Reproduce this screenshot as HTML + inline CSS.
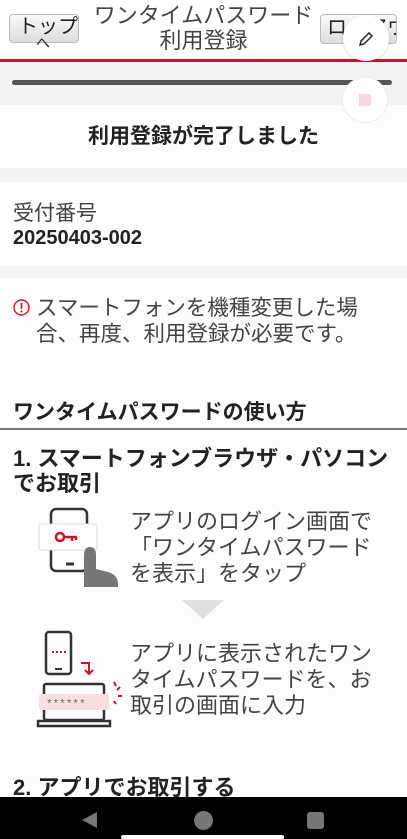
<!DOCTYPE html>
<html><head><meta charset="utf-8"><style>
*{margin:0;padding:0;box-sizing:border-box}
body{width:407px;height:839px;overflow:hidden;background:#fdfcfe;font-family:"Liberation Sans","Noto Sans CJK JP",sans-serif;color:#333;position:relative}
.abs{position:absolute;white-space:nowrap}
.gray{background:#f3f2f4}
</style></head><body>
<div class="abs" style="left:0;top:0;width:407px;height:60px;background:#fff"></div>
<div class="abs" style="left:9px;top:14px;width:70px;height:29px;border:1px solid #bbb;border-radius:4px;background:linear-gradient(#fafafa,#ddd);font-size:20px;line-height:20px;padding:2px 0 0 8px;color:#222;overflow:hidden">トップ</div>
<div class="abs" style="left:36px;top:36px;font-size:14px;line-height:14px;color:#222">へ</div>
<div class="abs" style="left:0;top:3px;width:407px;text-align:center;font-size:22px;line-height:25px;color:#444">ワンタイムパスワード<br>利用登録</div>
<div class="abs" style="left:320px;top:14px;width:77px;height:30px;border:1px solid #bbb;border-radius:4px;background:linear-gradient(#fafafa,#ddd);font-size:20px;line-height:20px;padding:3px 0 0 6px;color:#222;overflow:hidden">ログアウト</div>
<div class="abs" style="left:0;top:59px;width:407px;height:3px;background:#d8101e"></div>
<div class="abs gray" style="left:0;top:62px;width:407px;height:43px"></div>
<div class="abs" style="left:12px;top:80px;width:380px;height:5px;border-radius:3px;background:#555"></div>
<div class="abs" style="left:343px;top:15px;width:46px;height:46px;border-radius:50%;background:#fff;box-shadow:0 1px 3px rgba(0,0,0,.15)"></div>
<svg class="abs" style="left:357px;top:30px" width="18" height="18" viewBox="0 0 18 18"><path d="M3 15l1-4 8-8 3 3-8 8z" fill="none" stroke="#222" stroke-width="1.5"/></svg>
<div class="abs" style="left:342px;top:77px;width:46px;height:46px;border-radius:50%;background:#fff;border:1px solid #eee"></div>
<div class="abs" style="left:359px;top:94px;width:12px;height:12px;background:#f9d6dc"></div>
<div class="abs" style="left:0;top:120px;width:407px;text-align:center;font-size:21px;font-weight:bold;color:#222">利用登録が完了しました</div>
<div class="abs gray" style="left:0;top:168px;width:407px;height:14px"></div>
<div class="abs" style="left:13px;top:197px;font-size:21px;color:#444">受付番号</div>
<div class="abs" style="left:13px;top:227px;font-size:20px;font-weight:bold;color:#222">20250403-002</div>
<div class="abs gray" style="left:0;top:266px;width:407px;height:12px"></div>
<svg class="abs" style="left:13px;top:299px" width="17" height="17" viewBox="0 0 17 17"><circle cx="8.5" cy="8.5" r="7.5" fill="none" stroke="#d8101e" stroke-width="1.4"/><path d="M8.5 4v6" stroke="#d8101e" stroke-width="1.6"/><circle cx="8.5" cy="12.5" r="1" fill="#d8101e"/></svg>
<div class="abs" style="left:36px;top:295px;font-size:21.5px;line-height:26px;color:#444">スマートフォンを機種変更した場<br>合、再度、利用登録が必要です。</div>
<div class="abs" style="left:13px;top:396px;font-size:21px;font-weight:bold;color:#222">ワンタイムパスワードの使い方</div>
<div class="abs" style="left:0;top:428px;width:407px;height:2px;background:#777"></div>
<div class="abs" style="left:13px;top:446px;font-size:22px;line-height:25px;font-weight:bold;color:#222">1. スマートフォンブラウザ・パソコン<br>でお取引</div>
<svg class="abs" style="left:36px;top:505px" width="85" height="82" viewBox="0 0 85 82">
<rect x="15" y="4" width="36" height="62" rx="5" fill="none" stroke="#333" stroke-width="2.5"/>
<path d="M30 59h8" stroke="#333" stroke-width="3"/>
<rect x="3" y="19" width="58" height="26" rx="3" fill="#fff" stroke="#ddd"/>
<circle cx="24" cy="32" r="4" fill="none" stroke="#d8101e" stroke-width="2.5"/><path d="M28 32h13M36 32v4M40 32v3" stroke="#d8101e" stroke-width="2.5"/>
<path d="M48 85V50q0-8 6-8t6 8v14l12 3q10 3 10 12v6z" fill="#777"/>
</svg>
<div class="abs" style="left:130px;top:509px;font-size:22px;line-height:26px;color:#444">アプリのログイン画面で<br>「ワンタイムパスワード<br>を表示」をタップ</div>
<svg class="abs" style="left:182px;top:600px" width="42" height="20"><path d="M0 0h42L21 19z" fill="#e0e0e2"/></svg>
<svg class="abs" style="left:36px;top:630px" width="90" height="98" viewBox="0 0 90 98">
<rect x="10" y="2" width="25" height="42" rx="3" fill="none" stroke="#333" stroke-width="2.5"/>
<path d="M19 39h7" stroke="#333" stroke-width="2"/>
<path d="M16 22h14" stroke="#d8101e" stroke-width="2" stroke-dasharray="2 2"/>
<path d="M45 33h8v10M49 40l4 4 4-4" fill="none" stroke="#d8101e" stroke-width="2"/>
<rect x="8" y="54" width="60" height="36" rx="2" fill="none" stroke="#333" stroke-width="2.5"/>
<path d="M2 91h72v5H2z" fill="none" stroke="#333" stroke-width="2.5"/>
<rect x="3" y="64" width="70" height="16" rx="2" fill="#f8dde1"/>
<text x="10" y="77" font-size="11" fill="#666" font-family="Liberation Mono,monospace">******</text>
<path d="M78 52l2 4M84 57l-3 3M86 66h-4M80 74l-2-3" stroke="#d8101e" stroke-width="2"/>
</svg>
<div class="abs" style="left:130px;top:641px;font-size:22px;line-height:26px;color:#444">アプリに表示されたワン<br>タイムパスワードを、お<br>取引の画面に入力</div>
<div class="abs" style="left:13px;top:770px;font-size:22px;font-weight:bold;color:#222">2. アプリでお取引する</div>
<div class="abs" style="left:0;top:797px;width:407px;height:42px;background:#000"></div>
<svg class="abs" style="left:80px;top:810px" width="20" height="20"><path d="M17 2v16L2 10z" fill="#777"/></svg>
<div class="abs" style="left:194px;top:811px;width:19px;height:19px;border-radius:50%;background:#777"></div>
<div class="abs" style="left:307px;top:812px;width:17px;height:17px;border-radius:3px;background:#777"></div>
<div class="abs" style="left:121px;top:835px;width:163px;height:4px;border-radius:2px;background:#fff"></div>
</body></html>
